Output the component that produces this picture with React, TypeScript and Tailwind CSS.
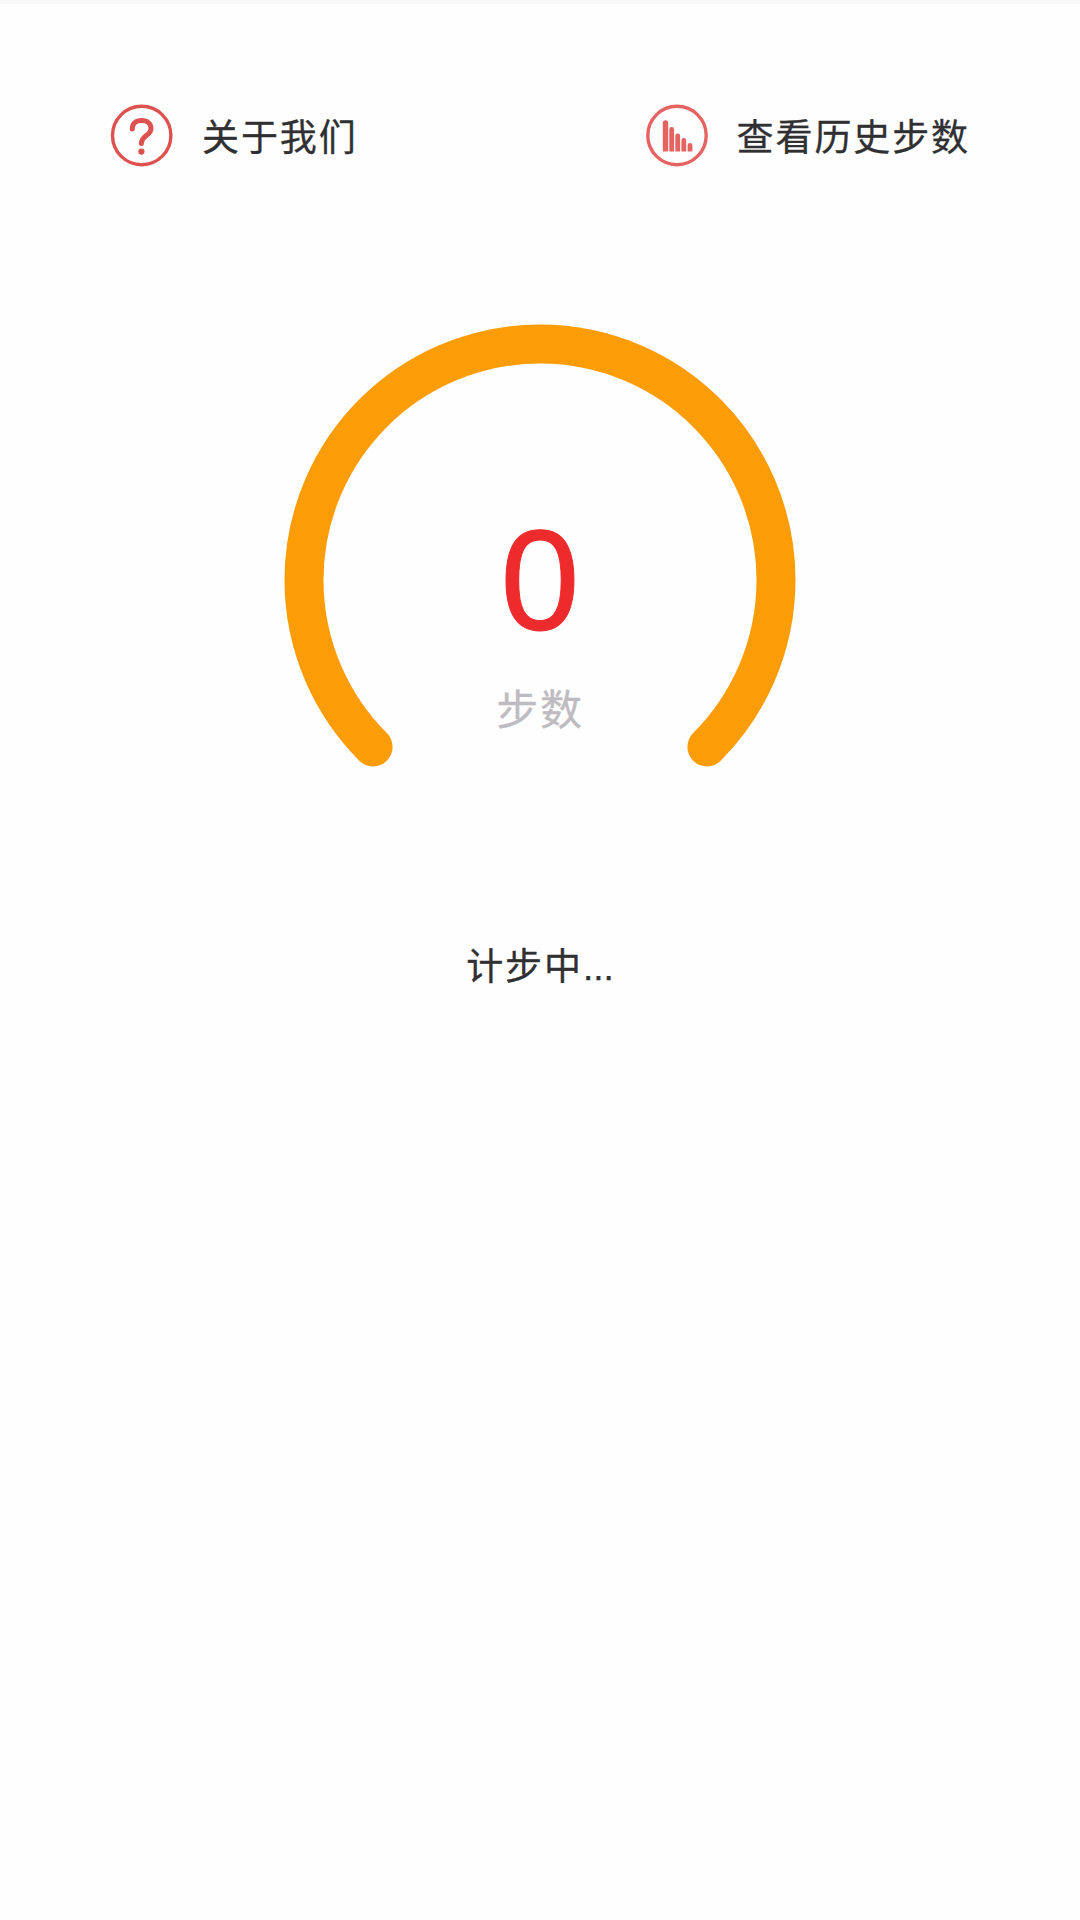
type EntryProps = {
  icon: React.ReactNode;
  label: string;
};

const QuestionIcon = () => (
  <svg className="h-16 w-16" viewBox="0 0 64 64" fill="none">
    <circle cx="31.7" cy="32.5" r="29.2" stroke="#dd524e" strokeWidth="3.4" />
    <path
      d="M22.3 26C22.3 20.4 26 17.6 31.6 17.6C37.6 17.6 41 20.8 41 25.4C41 32.6 31.4 32.6 31.4 40.4"
      stroke="#dd524e"
      strokeWidth="5"
      strokeLinecap="round"
    />
    <circle cx="31.4" cy="48.6" r="3.1" fill="#dd524e" />
  </svg>
);

const HistoryIcon = () => (
  <svg className="h-16 w-16" viewBox="0 0 64 64" fill="none">
    <circle cx="32" cy="32.5" r="29.2" stroke="#e56462" strokeWidth="3.4" />
    <g fill="#e56462">
      <path d="M17.8 48.5V20a2.7 2.7 0 0 1 5.4 0V48.5z" />
      <path d="M24.3 48.5V26.4a2.4 2.4 0 0 1 4.8 0V48.5z" />
      <path d="M30.3 48.5V33a2.4 2.4 0 0 1 4.8 0V48.5z" />
      <path d="M36.4 48.5V37.4a2.4 2.4 0 0 1 4.8 0V48.5z" />
      <path d="M42.6 48.5V42.4a2.4 2.4 0 0 1 4.8 0V48.5z" />
    </g>
  </svg>
);

const Entry = ({ icon, label }: EntryProps) => {
  return (
    <button className="flex items-center gap-7">
      {icon}
      <span className="text-[37px] leading-[54px] tracking-[1.9px] text-[#303033] [-webkit-text-stroke:0.3px]">
        {label}
      </span>
    </button>
  );
};

const StepGauge = ({ steps }: { steps: number }) => {
  return (
    <div className="grid h-[512px] w-[512px] place-items-center">
      <svg
        className="col-start-1 row-start-1 h-[512px] w-[512px]"
        viewBox="0 0 512 512"
        fill="none"
      >
        <path
          d="M89.1 422.9A236 236 0 1 1 422.9 422.9"
          stroke="#fc9d08"
          strokeWidth="39"
          strokeLinecap="round"
        />
      </svg>
      <div className="col-start-1 row-start-1 flex flex-col items-center gap-6 pt-[86px]">
        <span className="font-['Liberation_Sans',sans-serif] text-[142px] leading-[144px] text-[#ee2b2c] [-webkit-text-stroke:1px]">
          {steps}
        </span>
        <span className="text-[42px] leading-[60px] tracking-[1.8px] text-[#bebcc1] [-webkit-text-stroke:0.3px]">
          步数
        </span>
      </div>
    </div>
  );
};

const App = () => {
  return (
    <main className="flex min-h-screen w-full flex-col items-center border-t-4 border-[#f8f8f8] bg-[#fefefe] font-['Noto_Sans_CJK_SC',sans-serif]">
      <header className="flex w-full items-center justify-between pt-[99px] pr-[110px] pl-[110px]">
        <Entry icon={<QuestionIcon />} label="关于我们" />
        <Entry icon={<HistoryIcon />} label="查看历史步数" />
      </header>
      <section className="flex flex-col items-center pt-[157px]">
        <StepGauge steps={0} />
        <p className="pt-[105px] font-['Liberation_Sans','Noto_Sans_CJK_SC',sans-serif] text-[37px] leading-[54px] text-[#303033] [-webkit-text-stroke:0.3px]">
          <span className="tracking-[1.9px]">计步中</span>...
        </p>
      </section>
    </main>
  );
};

export default App;
